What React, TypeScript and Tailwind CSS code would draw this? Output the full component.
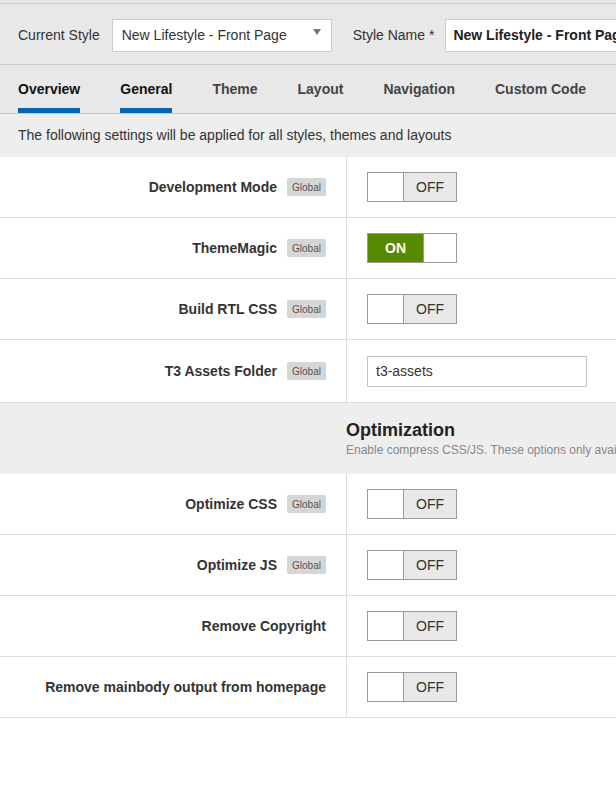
import React from 'react';

type Row = {
  label: string;
  global?: boolean;
  kind: 'off' | 'on' | 'input';
  value?: string;
  tall?: boolean;
};

const general: Row[] = [
  { label: 'Development Mode', global: true, kind: 'off' },
  { label: 'ThemeMagic', global: true, kind: 'on' },
  { label: 'Build RTL CSS', global: true, kind: 'off' },
  { label: 'T3 Assets Folder', global: true, kind: 'input', value: 't3-assets', tall: true },
];

const optimization: Row[] = [
  { label: 'Optimize CSS', global: true, kind: 'off' },
  { label: 'Optimize JS', global: true, kind: 'off' },
  { label: 'Remove Copyright', kind: 'off' },
  { label: 'Remove mainbody output from homepage', kind: 'off' },
];

const tabs = [
  { name: 'Overview', active: true },
  { name: 'General', active: true },
  { name: 'Theme' },
  { name: 'Layout' },
  { name: 'Navigation' },
  { name: 'Custom Code' },
];

function Toggle({ on }: { on: boolean }) {
  if (on) {
    return (
      <div className="flex h-[30px] w-[90px] border border-[#9a9a9a]">
        <div className="flex w-[55px] items-center justify-center bg-[#588a00] text-[14px] font-bold text-white">
          ON
        </div>
        <div className="flex-1 border-l border-[#9a9a9a] bg-white" />
      </div>
    );
  }
  return (
    <div className="flex h-[30px] w-[90px] border border-[#9a9a9a]">
      <div className="w-[35px] bg-white" />
      <div className="flex flex-1 items-center justify-center border-l border-[#9a9a9a] bg-[#e8e8e8] text-[14px] text-[#333]">
        OFF
      </div>
    </div>
  );
}

function SettingRow({ row }: { row: Row }) {
  return (
    <div className={`flex border-b border-[#dddddd] ${row.tall ? 'h-[63px]' : 'h-[61px]'}`}>
      <div className="flex w-[347px] shrink-0 items-center justify-end gap-[10px] border-r border-[#dddddd] pr-[20px]">
        <span className="text-[14px] font-bold text-[#333]">{row.label}</span>
        {row.global && (
          <span className="flex h-[18px] w-[39px] items-center justify-center rounded-[2px] bg-[#d6d6d6] text-[10px] text-[#555]">
            Global
          </span>
        )}
      </div>
      <div className="flex flex-1 items-center pl-[20px]">
        {row.kind === 'input' ? (
          <div className="flex h-[31px] w-[220px] items-center border border-[#c4c4c4] bg-white px-[8px] text-[14px] text-[#333]">
            {row.value}
          </div>
        ) : (
          <Toggle on={row.kind === 'on'} />
        )}
      </div>
    </div>
  );
}

export default function App() {
  return (
    <div
      className="min-h-[808px] w-full overflow-hidden bg-white whitespace-nowrap"
      style={{ fontFamily: '"Liberation Sans", Arial, sans-serif' }}
    >
      {/* header */}
      <div className="bg-[#e8e8e8] pt-[3px]">
        <div className="flex h-[62px] items-center border-t border-b border-[#cccccc] pl-[18px] pt-[2px]">
          <span className="mr-[12px] shrink-0 text-[14px] text-[#333]">Current Style</span>
          <div className="flex h-[33px] w-[220px] shrink-0 items-center justify-between border border-[#cccccc] bg-white pl-[9px] pr-[10px] text-[14px] text-[#333]">
            <span>New Lifestyle - Front Page</span>
            <svg width="8" height="6" viewBox="0 0 8 6" className="mb-[6px]">
              <path d="M0 0h8L4 6z" fill="#777" />
            </svg>
          </div>
          <span className="ml-[21px] mr-[11px] shrink-0 text-[14px] text-[#333]">Style Name *</span>
          <div className="flex h-[33px] w-[300px] shrink-0 items-center border border-[#cccccc] bg-white pl-[7px] text-[14px] font-bold text-[#222]">
            New Lifestyle - Front Page
          </div>
        </div>
        <div className="flex h-[49px] items-end gap-[40px] border-b border-[#c8c8c8] pl-[18px]">
          {tabs.map((t) => (
            <div
              key={t.name}
              className={`flex h-full flex-col justify-center border-b-[5px] pt-[5px] text-[14px] font-bold ${
                t.active ? 'border-[#0066b3] text-[#111]' : 'border-transparent text-[#444]'
              }`}
            >
              {t.name}
            </div>
          ))}
        </div>
      </div>

      <div className="flex h-[43px] items-center bg-[#eeeeee] pl-[18px] text-[14px] text-[#333]">
        The following settings will be applied for all styles, themes and layouts
      </div>

      {general.map((r) => (
        <SettingRow key={r.label} row={r} />
      ))}

      <div className="flex h-[71px] bg-[#eeeeee]">
        <div className="w-[346px] shrink-0" />
        <div className="flex flex-col justify-center pb-[2px]">
          <div className="text-[18px] font-bold leading-[24px] text-[#222]">Optimization</div>
          <div className="text-[12px] leading-[16px] text-[#888]">
            Enable compress CSS/JS. These options only available when Development Mode is OFF
          </div>
        </div>
      </div>

      {optimization.map((r) => (
        <SettingRow key={r.label} row={r} />
      ))}
    </div>
  );
}
